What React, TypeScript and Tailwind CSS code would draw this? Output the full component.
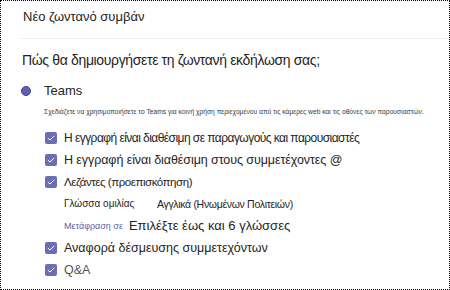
import React from "react";

function Check() {
  return (
    <span className="flex h-[12px] w-[12px] shrink-0 items-center justify-center rounded-[2px] bg-[#6b6eb3]">
      <svg width="8" height="6" viewBox="0 0 8 6" fill="none">
        <path d="M0.8 3.1 L3 5 L7.2 0.9" stroke="#ffffff" strokeWidth="1" />
      </svg>
    </span>
  );
}

function CheckRow({ label, className = "" }: { label: string; className?: string }) {
  return (
    <div className="flex h-[22px] items-center pl-[44px]">
      <Check />
      <span className={"ml-[7px] whitespace-nowrap leading-[16px] " + className}>{label}</span>
    </div>
  );
}

export default function App() {
  return (
    <div
      className="box-border h-[290px] w-[450px] overflow-hidden border border-dotted border-black bg-white text-[#252424]"
      style={{ fontFamily: '"Liberation Sans", Arial, sans-serif' }}
    >
      <div className="ml-[20px] h-[38px] border-b border-[#ececec] pl-[2px] pt-[8px]">
        <div className="text-[13px] leading-[16px]">Νέο ζωντανό συμβάν</div>
      </div>
      <div className="mt-[11px] whitespace-nowrap pl-[21px] text-[14px] leading-[20px] tracking-[-0.35px]">
        Πώς θα δημιουργήσετε τη ζωντανή εκδήλωση σας;
      </div>
      <div className="mt-[13px] flex h-[16px] items-center pl-[20px]">
        <span className="h-[10px] w-[10px] rounded-full border border-[#3d3f7a] bg-[#5f62b0]" />
        <span className="ml-[13px] text-[13px] leading-[16px]">Teams</span>
      </div>
      <div className="mt-[8px] whitespace-nowrap pl-[43px] text-[6.7px] leading-[9px] text-[#3b3a39]">
        Σχεδιάζετε να χρησιμοποιήσετε το Teams για κοινή χρήση περιεχομένου από τις κάμερες web και τις οθόνες των παρουσιαστών.
      </div>
      <div className="mt-[11px]">
        <CheckRow
          label="Η εγγραφή είναι διαθέσιμη σε παραγωγούς και παρουσιαστές"
          className="text-[12px] tracking-[-0.55px]"
        />
        <CheckRow
          label="Η εγγραφή είναι διαθέσιμη στους συμμετέχοντες @"
          className="text-[12.5px] tracking-[-0.08px]"
        />
        <CheckRow label="Λεζάντες (προεπισκόπηση)" className="text-[11.5px] tracking-[-0.45px]" />
        <div className="flex h-[22px] items-center pl-[63px]">
          <span className="w-[93px] whitespace-nowrap text-[10px] leading-[14px]">Γλώσσα ομιλίας</span>
          <span className="whitespace-nowrap text-[10.5px] leading-[14px] tracking-[-0.32px]">
            Αγγλικά (Ηνωμένων Πολιτειών)
          </span>
        </div>
        <div className="flex h-[22px] items-center pl-[63px]">
          <span className="whitespace-nowrap text-[9px] leading-[12px] text-[#5b5fa8]">Μετάφραση σε</span>
          <span className="ml-[6px] whitespace-nowrap text-[13px] leading-[16px]">Επιλέξτε έως και 6 γλώσσες</span>
        </div>
        <CheckRow label="Αναφορά δέσμευσης συμμετεχόντων" className="text-[12.5px]" />
        <CheckRow label="Q&A" className="text-[12.5px] text-[#555555]" />
      </div>
    </div>
  );
}
